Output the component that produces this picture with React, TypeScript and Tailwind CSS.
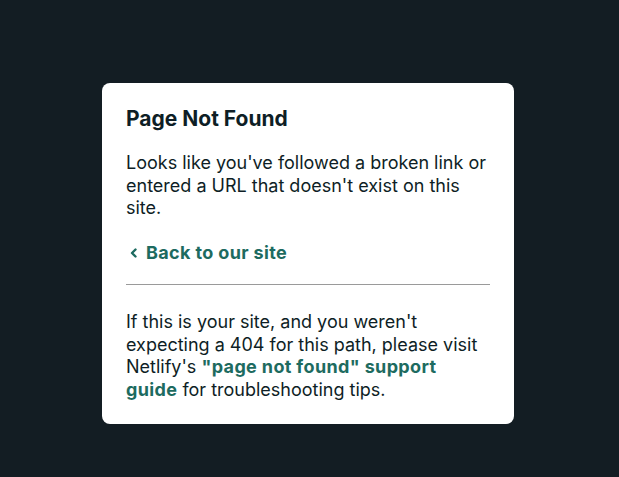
export default function App() {
  return (
    <div className="min-h-screen w-full bg-[#131d23] flex justify-center items-start pt-[83px] pr-[3px] font-['Inter',sans-serif]">
      <div className="w-[412px] bg-white rounded-lg px-6 pt-6 pb-[23px] text-[#0e1e25]">
        <h1 className="text-[21px] font-bold leading-6">Page Not Found</h1>
        <p className="mt-[21px] text-[18px] leading-[22.5px]">
          Looks like you've followed a broken link or entered a URL that doesn't exist on this site.
        </p>
        <a href="#" className="mt-[22px] flex items-center gap-1.5 text-[18px] leading-[22.5px] font-bold tracking-[0.02em] text-[#1d6b60]">
          <svg width="12" height="12" viewBox="0 0 12 12" fill="none" stroke="currentColor" strokeWidth="2.4" strokeLinecap="round" strokeLinejoin="round" className="ml-[2px]">
            <path d="M7.5 2.5 4 6l3.5 3.5" />
          </svg>
          Back to our site
        </a>
        <hr className="mt-5 border-t border-[#9a9a9a]" />
        <p className="mt-[26px] text-[18px] leading-[22.5px]">
          If this is your site, and you weren't expecting a 404 for this path, please visit Netlify's{" "}
          <a href="#" className="font-bold tracking-[0.02em] text-[#1d6b60]">"page not found" support guide</a> for troubleshooting tips.
        </p>
      </div>
    </div>
  );
}
